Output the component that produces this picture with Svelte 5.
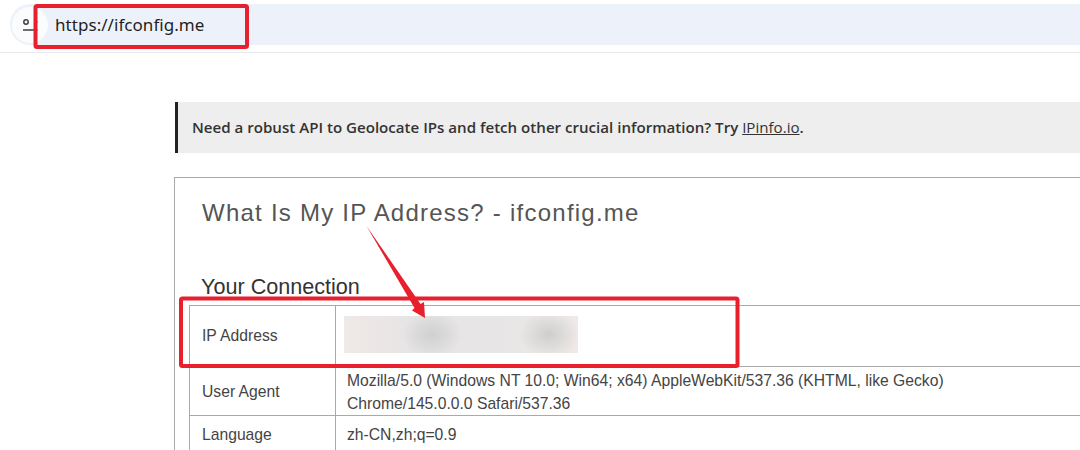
<script>
  const rows = [
    { label: 'User Agent', lines: ['Mozilla/5.0 (Windows NT 10.0; Win64; x64) AppleWebKit/537.36 (KHTML, like Gecko)', 'Chrome/145.0.0.0 Safari/537.36'] },
    { label: 'Language', lines: ['zh-CN,zh;q=0.9'] }
  ];
</script>

<div class="page">
  <header class="toolbar">
    <div class="omnibox">
      <span class="site-btn">
        <svg width="16" height="16" viewBox="0 0 16 16" fill="none" stroke="#3c4043" stroke-width="1.5">
          <circle cx="4" cy="5" r="2.200" />
          <path d="M1 13h11M12.500 5h3M14 13h1.500" />
        </svg>
      </span>
      <span class="url">https://ifconfig.me</span>
    </div>
  </header>

  <main class="content">
    <div class="notice">
      Need a robust API to Geolocate IPs and fetch other crucial information? Try <a href="#top">IPinfo.io</a>.
    </div>

    <section class="card">
      <h1>What Is My IP Address? - ifconfig.me</h1>
      <h2>Your Connection</h2>
      <table>
        <tbody>
          <tr class="ip-row">
            <td class="key">IP Address</td>
            <td class="val"><div class="blur"></div></td>
          </tr>
          {#each rows as row}
            <tr>
              <td class="key">{row.label}</td>
              <td class="val">
                {#each row.lines as line}
                  <div>{line}</div>
                {/each}
              </td>
            </tr>
          {/each}
        </tbody>
      </table>
    </section>
  </main>

  <!-- red annotations drawn over the screenshot -->
  <svg class="marks" width="1080" height="450" viewBox="0 0 1080 450" fill="none">
    <rect x="35.500" y="6" width="211.500" height="41" rx="1.500" stroke="#e8202e" stroke-width="4" />
    <rect x="181" y="298.500" width="556.500" height="67.500" rx="1.500" stroke="#e8202e" stroke-width="4" />
    <path d="M366.500 226 L414.500 308 L412 310.500 L425 318 L424 302 L420.500 304 Z" fill="#e8202e" />
  </svg>
</div>

<style>
  :global(body) {
    margin: 0;
    background: #fff;
  }

  .page {
    position: relative;
    width: 1080px;
    height: 450px;
    overflow: hidden;
    background: #fff;
  }

  .toolbar {
    height: 53px;
    box-sizing: border-box;
    padding: 4px 0 0 10px;
    border-bottom: 1px solid #e6e8ec;
  }

  .omnibox {
    display: flex;
    align-items: center;
    height: 41px;
    border-radius: 20px 0 0 20px;
    background: #edf2fa;
  }

  .site-btn {
    display: flex;
    align-items: center;
    justify-content: center;
    width: 36px;
    height: 36px;
    margin-left: 2px;
    border-radius: 50%;
    background: #fbfcfe;
  }

  .url {
    margin-left: 7px;
    font: 17px "Noto Sans", sans-serif;
    color: #1f1f1f;
    letter-spacing: 0.05px;
  }

  .content {
    padding: 49px 0 0 175px;
  }

  .notice {
    height: 51px;
    box-sizing: border-box;
    padding-left: 14px;
    border-left: 3px solid #222;
    background: #eeeeee;
    font: 600 15.100px/51px "Open Sans", sans-serif;
    color: #333;
    white-space: nowrap;
  }

  .notice a {
    color: #333;
    font-weight: 400;
  }

  .card {
    margin: 24px 0 0 -1px;
    height: 300px;
    box-sizing: border-box;
    padding: 0 0 0 14px;
    border: 1px solid #aaa;
    border-right: 0;
    border-bottom: 0;
    font-family: "Liberation Sans", Arial, sans-serif;
  }

  h1 {
    margin: 0;
    padding: 21px 0 0 13px;
    font-size: 24px;
    line-height: 28px;
    font-weight: 400;
    letter-spacing: 1.240px;
    color: #555;
  }

  h2 {
    margin: 47px 0 0 12px;
    font-size: 21.600px;
    line-height: 26px;
    font-weight: 400;
    color: #333;
  }

  table {
    margin-top: 5px;
    width: 892px;
    border-collapse: collapse;
    table-layout: fixed;
    font-size: 15.700px;
    color: #444;
  }

  td {
    border: 1px solid #aaa;
    padding: 0;
    vertical-align: middle;
  }

  .key {
    width: 146px;
    padding: 2px 0 0 12px;
    box-sizing: border-box;
  }

  .ip-row .key {
    padding-top: 0;
  }

  .val {
    padding: 2px 0 0 11px;
    line-height: 23px;
    white-space: nowrap;
  }

  tr {
    height: 36px;
  }

  .ip-row {
    height: 61px;
  }

  .ip-row .val {
    padding: 0 0 4px 8px;
  }

  .blur {
    width: 234px;
    height: 37px;
    background:
      radial-gradient(ellipse 30px 24px at 88px 50%, #d0d0d0, transparent),
      radial-gradient(ellipse 30px 24px at 205px 50%, #cecece, transparent),
      linear-gradient(90deg, #efe9e7, #e6e4e4 30%, #e8e6e6 70%, #efe9e7);
  }

  .marks {
    position: absolute;
    top: 0;
    left: 0;
    pointer-events: none;
  }
</style>
